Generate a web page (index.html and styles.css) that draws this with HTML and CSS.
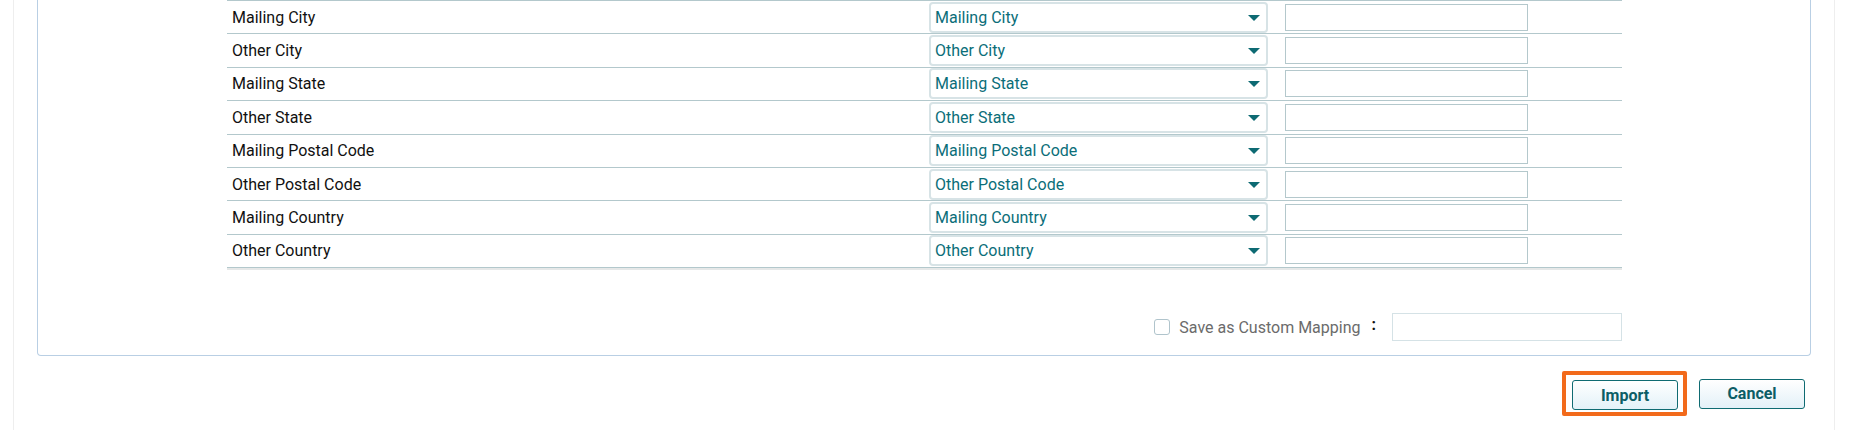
FILE: index.html
```html
<!DOCTYPE html>
<html lang="en">
<head>
  <meta charset="UTF-8" />
  <title>Import Mapping</title>
  <link rel="stylesheet" href="styles.css">
</head>
<body>
  <div class="page">
    <div class="panel">
      <div class="mapping">
        <div class="row">
          <div class="field">Mailing City</div>
          <div class="pick"><div class="select">Mailing City<span class="arrow"></span></div></div>
          <div class="extra"><input type="text" class="box"></div>
        </div>
        <div class="row">
          <div class="field">Other City</div>
          <div class="pick"><div class="select">Other City<span class="arrow"></span></div></div>
          <div class="extra"><input type="text" class="box"></div>
        </div>
        <div class="row">
          <div class="field">Mailing State</div>
          <div class="pick"><div class="select">Mailing State<span class="arrow"></span></div></div>
          <div class="extra"><input type="text" class="box"></div>
        </div>
        <div class="row">
          <div class="field">Other State</div>
          <div class="pick"><div class="select">Other State<span class="arrow"></span></div></div>
          <div class="extra"><input type="text" class="box"></div>
        </div>
        <div class="row">
          <div class="field">Mailing Postal Code</div>
          <div class="pick"><div class="select">Mailing Postal Code<span class="arrow"></span></div></div>
          <div class="extra"><input type="text" class="box"></div>
        </div>
        <div class="row">
          <div class="field">Other Postal Code</div>
          <div class="pick"><div class="select">Other Postal Code<span class="arrow"></span></div></div>
          <div class="extra"><input type="text" class="box"></div>
        </div>
        <div class="row">
          <div class="field">Mailing Country</div>
          <div class="pick"><div class="select">Mailing Country<span class="arrow"></span></div></div>
          <div class="extra"><input type="text" class="box"></div>
        </div>
        <div class="row last">
          <div class="field">Other Country</div>
          <div class="pick"><div class="select">Other Country<span class="arrow"></span></div></div>
          <div class="extra"><input type="text" class="box"></div>
        </div>
      </div>

      <div class="save">
        <label class="save-label"><span class="check"></span>Save as Custom Mapping</label>
        <span class="colon">:</span>
        <input type="text" class="save-name">
      </div>
    </div>

    <div class="actions">
      <span class="highlight"><button class="btn">Import</button></span>
      <button class="btn">Cancel</button>
    </div>
  </div>
</body>
</html>
```

FILE: styles.css
```css
body {
  margin: 0;
  background-color: #fff;
  font-family: Roboto, 'Liberation Sans', sans-serif;
  font-size: 16px;
  color: #111;
}
.page {
  margin: 0 28px 0 13px;
  height: 430px;
  border-left: 1px solid #eeeeee;
  border-right: 1px solid #eeeeee;
}
.panel {
  margin: 0 23px;
  border: 1px solid #b9cfe4;
  border-top: none;
  border-radius: 0 0 4px 4px;
  padding: 0 188px 14px 189px;
}
.mapping {
  border-top: 1px solid #b3c8cc;
}
.row {
  display: flex;
  align-items: center;
  height: 33.375px;
  box-sizing: border-box;
  border-bottom: 1px solid #b3c8cc;
}
.row.last {
  box-shadow: 0 2px 0 #e6e8e8;
}
.field {
  width: 702px;
  padding-left: 5px;
  box-sizing: border-box;
}
.pick {
  width: 339px;
}
.select {
  position: relative;
  height: 31px;
  box-sizing: border-box;
  border: 2px solid #d7e3e6;
  border-radius: 4px;
  padding: 4px 4px;
  color: #0b6e79;
}
.arrow {
  position: absolute;
  right: 6px;
  top: 11px;
  border-left: 6.5px solid transparent;
  border-right: 6.5px solid transparent;
  border-top: 6px solid #0d6a73;
}
.extra {
  padding-left: 17px;
}
.box {
  display: block;
  width: 243px;
  height: 27px;
  box-sizing: border-box;
  border: 1px solid #b4c8cc;
  margin: 0;
  padding: 0 4px;
}
.save {
  display: flex;
  justify-content: flex-end;
  align-items: center;
  margin-top: 45px;
}
.save-label {
  display: flex;
  align-items: center;
  color: #6b6b6b;
}
.check {
  width: 16px;
  height: 16px;
  box-sizing: border-box;
  border: 1px solid #b0c4cc;
  border-radius: 3px;
  margin-right: 9px;
}
.colon {
  font-weight: bold;
  color: #111;
  margin: 0 16px 0 11px;
  position: relative;
  top: -3px;
}
.save-name {
  width: 230px;
  height: 28px;
  box-sizing: border-box;
  border: 1px solid #d5e2e6;
  margin: 0;
}
.actions {
  display: flex;
  justify-content: flex-end;
  align-items: center;
  margin: 15px 29px 0 0;
}
.highlight {
  display: inline-block;
  border: 4px solid #f26a1b;
  border-radius: 2px;
  padding: 5px 5px 2px 6px;
  margin-right: 12px;
}
.btn {
  width: 106px;
  height: 30px;
  border: 1px solid #0f6b72;
  border-radius: 3px;
  background: linear-gradient(#ffffff, #e3f1f8);
  color: #0c5d66;
  font-family: Roboto, 'Liberation Sans', sans-serif;
  font-size: 16px;
  font-weight: bold;
  cursor: pointer;
}
```
